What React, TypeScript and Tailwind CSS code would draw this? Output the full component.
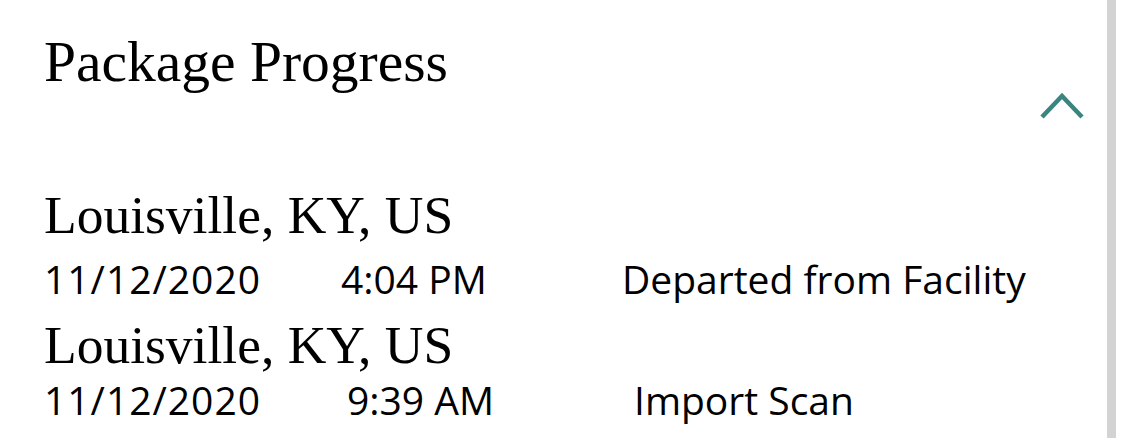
const serif = { fontFamily: '"Liberation Serif", "Times New Roman", serif' }

interface EventProps {
  location: string
  date: string
  time: string
  status: string
  timeShift: string
  statusShift: string
  gapClass: string
  dateGap: string
}

function ProgressEvent({ location, date, time, status, timeShift, statusShift, gapClass, dateGap }: EventProps) {
  return (
    <div className={gapClass}>
      <div className="font-['Liberation_Serif',serif] text-[53.5px] leading-none text-black">{location}</div>
      <div className={`grid grid-cols-[297px_281px_1fr] font-['Open_Sans',sans-serif] text-[39px] leading-none text-black ${dateGap}`}>
        <span className="tracking-[1px]">{date}</span>
        <span className={timeShift}>{time}</span>
        <span className={statusShift}>{status}</span>
      </div>
    </div>
  )
}

export default function App() {
  return (
    <div className="flex h-[438px] w-[1125px] overflow-hidden bg-white">
      <div className="flex-1 pl-[44px] pr-[23px]">
        <h1 style={serif} className="mt-[33px] text-[57.5px] leading-none font-normal text-black">
          Package Progress
        </h1>
        <div className="mt-[1px] flex justify-end">
          <svg width="44" height="28" viewBox="0 0 44 28" fill="none">
            <polyline points="2,25 22,4 42,25" stroke="#3a8580" strokeWidth="4.5" strokeLinecap="butt" strokeLinejoin="miter" />
          </svg>
        </div>
        <ProgressEvent
          location="Louisville, KY, US"
          date="11/12/2020"
          time="4:04 PM"
          status="Departed from Facility"
          timeShift=""
          statusShift=""
          gapClass="mt-[69px]"
          dateGap="mt-[17px]"
        />
        <ProgressEvent
          location="Louisville, KY, US"
          date="11/12/2020"
          time="9:39 AM"
          status="Import Scan"
          timeShift="ml-[6px]"
          statusShift="ml-[12px]"
          gapClass="mt-[21px]"
          dateGap="mt-[7px]"
        />
      </div>
      <div className="w-[9px] bg-[#d3d3d3]"></div>
      <div className="w-[9px]"></div>
    </div>
  )
}
